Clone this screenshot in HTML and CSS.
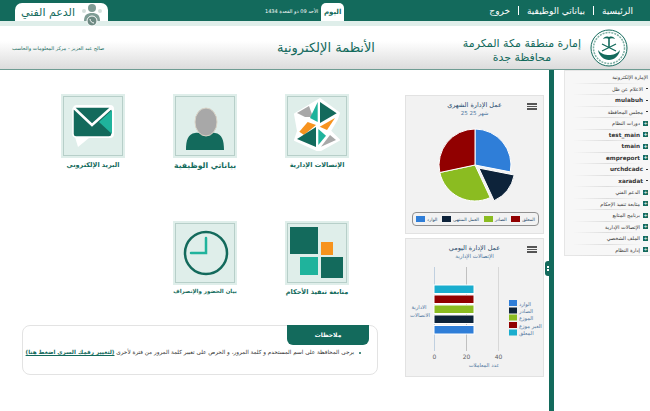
FILE: index.html
```html
<!DOCTYPE html>
<html lang="ar">
<head>
    <meta charset="UTF-8">
    <title>الأنظمة الإلكترونية</title>
    <link rel="stylesheet" href="styles.css">
</head>
<body>
    <div class="topbar">
        <div class="support-tab">
            <span>الدعم الفني</span>
            <svg class="support-icon" viewBox="0 0 22 24" width="22" height="24">
                <circle cx="11" cy="5" r="4" fill="#7f9c95"/>
                <path d="M3 18c0-6 3-8 8-8s8 2 8 8z" fill="#7f9c95"/>
                <circle cx="3" cy="8" r="2" fill="#d5dfdc"/>
                <circle cx="19" cy="8" r="2" fill="#d5dfdc"/>
                <circle cx="11" cy="18" r="5" fill="#6d8a83" stroke="#fff"/>
                <path d="M9 16c0 2 2 4 4 4" stroke="#fff" fill="none"/>
            </svg>
        </div>
        <div class="today">
            <span class="today-date">الأحد 09 ذو القعدة 1434</span>
            <span class="today-tab">اليوم</span>
        </div>
        <nav class="topnav">
            <a>خروج</a>
            <i></i>
            <a>بياناتي الوظيفية</a>
            <i></i>
            <a>الرئيسية</a>
        </nav>
    </div>
    <div class="strip"></div>

    <header class="masthead">
        <div class="credit">صالح عبد العزيز - مركز المعلومات والحاسب</div>
        <div class="system-name">الأنظمة الإلكترونية</div>
        <div class="emirate">
            <div class="emirate-name">إمارة منطقة مكة المكرمة<br>محافظة جدة</div>
            <svg class="seal" viewBox="0 0 38 38" width="38" height="38">
                <circle cx="19" cy="19" r="18" fill="#fff" stroke="#136a5c" stroke-width="1"/>
                <circle cx="19" cy="19" r="15.500" fill="none" stroke="#7fb0a4" stroke-width="1.500" stroke-dasharray="2 1"/>
                <path d="M19 8v11" stroke="#136a5c" stroke-width="1.600"/>
                <path d="M19 8c-3-1-5 0-6 2 2-1 4-1 6 0 2-1 4-1 6 0-1-2-3-3-6-2z" fill="#136a5c"/>
                <path d="M12 15l14 7M26 15l-14 7" stroke="#136a5c" stroke-width="1.300"/>
                <path d="M8 21c1 6 6 10 11 10s10-4 11-10c-3 4-7 5-11 5s-8-1-11-5z" fill="#136a5c"/>
            </svg>
        </div>
    </header>

    <div class="page">
        <main class="content">
            <div class="launcher">
                <div class="apps">
                    <a class="app">
                        <span class="tile">
                            <svg viewBox="0 0 64 64" width="64" height="64">
                                <path d="M35 5l19 14-2 6-7 12 9 9-18 10h-4L10 46l3-9-3-17z" fill="#fff" stroke="#fff" stroke-width="2" stroke-linejoin="round"/>
                                <path d="M12 19l12-7 4 11h-8z" fill="#a8a8a8"/>
                                <path d="M25 24l7.700-16v20z" fill="#1fb39c"/>
                                <path d="M35 8l16.700 11.300L35 29z" fill="#136a5c"/>
                                <path d="M14.300 37.700L22.700 28l8.300 3-12 10z" fill="#f7931e"/>
                                <path d="M34.700 32.700L50 24l-8 12z" fill="#f7931e"/>
                                <path d="M12 45l19-12v20z" fill="#136a5c"/>
                                <path d="M33.300 35l7.700 6.700-7.700 9.300z" fill="#1fb39c"/>
                                <path d="M36 52.700L45 41l6 5z" fill="#a8a8a8"/>
                            </svg>
                        </span>
                        <span class="app-label">الإتصالات الإدارية</span>
                    </a>
                    <a class="app">
                        <span class="tile">
                            <svg viewBox="0 0 64 64" width="64" height="64">
                                <path d="M13 56c0-10 2-16 9-17 4-1 6 1 10 1s6-2 10-1c7 1 9 7 9 17z" fill="#136a5c"/>
                                <ellipse cx="33" cy="28" rx="11" ry="14" fill="#a8a8a8" stroke="#d9d3c6"/>
                            </svg>
                        </span>
                        <span class="app-label big">بياناتي الوظيفية</span>
                    </a>
                    <a class="app">
                        <span class="tile">
                            <svg viewBox="0 0 64 64" width="64" height="64">
                                <path d="M17 53l-3-10h2a4 4 0 0 1-4-3v-25a4 4 0 0 1 4-4h33a4 4 0 0 1 4 4v25a4 4 0 0 1-4 4H28z" fill="#fff"/>
                                <path d="M15 13h33a3 3 0 0 1 3 3v24a3 3 0 0 1-3 3H15a3 3 0 0 1-3-3V16a3 3 0 0 1 3-3z" fill="#136a5c" stroke="#fff" stroke-width="1.500"/>
                                <path d="M38 28l13-12v24z" fill="#1fb39c"/>
                                <path d="M13 14l18 17 19-17" fill="none" stroke="#fff" stroke-width="2.500"/>
                            </svg>
                        </span>
                        <span class="app-label">البريد الإلكتروني</span>
                    </a>
                    <a class="app">
                        <span class="tile">
                            <svg viewBox="0 0 64 64" width="64" height="64">
                                <rect x="5" y="6" width="28" height="27" fill="#136a5c"/>
                                <rect x="36" y="21" width="12" height="13" fill="#f7931e"/>
                                <rect x="15" y="36" width="18" height="18" fill="#1fb39c"/>
                                <rect x="36" y="36" width="22" height="21" fill="#136a5c"/>
                            </svg>
                        </span>
                        <span class="app-label">متابعة تنفيذ الأحكام</span>
                    </a>
                    <a class="app">
                        <span class="tile">
                            <svg viewBox="0 0 64 64" width="64" height="64">
                                <circle cx="33" cy="32" r="21" fill="none" stroke="#136a5c" stroke-width="2.500"/>
                                <path d="M33 17v15H18" fill="none" stroke="#1fb39c" stroke-width="2.500" stroke-linecap="round"/>
                            </svg>
                        </span>
                        <span class="app-label small">بيان الحضور والإنصراف</span>
                    </a>
                </div>
                <section class="notes">
                    <h3 class="notes-tab">ملاحظات</h3>
                    <p class="notes-line">
                        <span class="bullet"></span>
                        يرجى المحافظة على اسم المستخدم و كلمة المرور، و الحرص على تغيير كلمة المرور من فترة لأخرى
                        <a>(لتغيير رقمك السري اضغط هنا)</a>
                    </p>
                </section>
            </div>

            <div class="charts">
                <section class="panel">
                    <span class="panel-menu"></span>
                    <h4 class="panel-title">عمل الإدارة الشهري</h4>
                    <div class="panel-sub">شهر 25 25</div>
                    <svg class="pie" viewBox="-40 -40 82 82" width="82" height="82">
                        <g stroke="#fff" stroke-width="1">
                            <path d="M0 0V-36A36 36 0 0 1 35.3 6.9z" fill="#2f7ed8"/>
                            <path d="M3.9 3.1L39.2 10A36 36 0 0 1 19.1 35.7z" fill="#0d233a"/>
                            <path d="M0 0L15.2 32.6A36 36 0 0 1 -35.2 7.5z" fill="#8bbc21"/>
                            <path d="M0 0L-35.2 7.5A36 36 0 0 1 0 -36z" fill="#910000"/>
                        </g>
                    </svg>
                    <div class="pie-legend">
                        <span class="key"><i class="blue"></i>الوارد</span>
                        <span class="key"><i class="navy"></i>العمل المنتهي</span>
                        <span class="key"><i class="green"></i>الصادر</span>
                        <span class="key"><i class="red"></i>المعلق</span>
                    </div>
                </section>
                <section class="panel">
                    <span class="panel-menu"></span>
                    <h4 class="panel-title">عمل الإدارة اليومي</h4>
                    <div class="panel-sub">الإتصالات الإدارية</div>
                    <svg class="bars" viewBox="0 0 137 117" width="137" height="117">
                        <g stroke="#c0c0c0" stroke-width="1">
                            <path d="M28.500 7v84" stroke="#c0d0e0"/>
                            <path d="M60.500 7v84"/>
                            <path d="M92.500 7v84" stroke="#d8d8d8"/>
                        </g>
                        <g stroke="#fff" stroke-width="1">
                            <rect x="28" y="25" width="40" height="8.500" fill="#1aadce"/>
                            <rect x="28" y="35" width="40" height="8.500" fill="#910000"/>
                            <rect x="28" y="45" width="40" height="8.500" fill="#8bbc21"/>
                            <rect x="28" y="55" width="40" height="8.500" fill="#0d233a"/>
                            <rect x="28" y="65.500" width="40" height="8.500" fill="#2f7ed8"/>
                        </g>
                        <g class="axis-num" text-anchor="middle">
                            <text x="28.500" y="99">0</text>
                            <text x="60.500" y="99">20</text>
                            <text x="92.500" y="99">40</text>
                        </g>
                        <g class="axis-label" text-anchor="middle">
                            <text x="78" y="107">عدد المعاملات</text>
                            <text x="13" y="49">الادارية</text>
                            <text x="14" y="57">الاتصالات</text>
                        </g>
                        <rect x="103" y="40" width="8" height="6" fill="#2f7ed8"/>
                        <rect x="103" y="47.500" width="8" height="6" fill="#0d233a"/>
                        <rect x="103" y="54.500" width="8" height="6" fill="#8bbc21"/>
                        <rect x="103" y="62" width="8" height="6" fill="#910000"/>
                        <rect x="103" y="69.500" width="8" height="6" fill="#1aadce"/>
                        <g class="axis-label">
                            <text x="113" y="46">الوارد</text>
                            <text x="113" y="53">الصادر</text>
                            <text x="113" y="60">الموزع</text>
                            <text x="113" y="67.500">الغير موزع</text>
                            <text x="113" y="75">المعلق</text>
                        </g>
                    </svg>
                </section>
            </div>
        </main>

        <div class="divider"><span class="handle"></span></div>

        <aside class="sidemenu">
            <a class="item">الإمارة الإلكترونية</a>
            <a class="item dash">الاعلام عن ظل</a>
            <a class="item dash latin">mulabuh</a>
            <a class="item dash">مجلس المحافظة</a>
            <a class="item plus">دورات النظام</a>
            <a class="item plus latin">test_main</a>
            <a class="item plus latin">tmain</a>
            <a class="item plus latin">empreport</a>
            <a class="item dash latin">urchdcadc</a>
            <a class="item dash latin">xaradat</a>
            <a class="item plus">الدعم الفني</a>
            <a class="item plus">متابعة تنفيذ الإحكام</a>
            <a class="item plus">برنامج المتابع</a>
            <a class="item plus">الإتصالات الإدارية</a>
            <a class="item plus">الملف الشخصي</a>
            <a class="item plus">إدارة النظام</a>
        </aside>
    </div>
</body>
</html>
```

FILE: styles.css
```css
* {
    box-sizing: border-box;
}

body {
    font-family: "DejaVu Sans", sans-serif;
    background-color: #fff;
    margin: 0;
    width: 650px;
    height: 411px;
    overflow: hidden;
}

.topbar {
    display: flex;
    align-items: flex-end;
    height: 21px;
    padding: 0 17px 0 15px;
    background-color: #136a5c;
    color: #fff;
}

.support-tab {
    display: flex;
    align-items: center;
    gap: 6px;
    width: 93px;
    height: 18px;
    padding-left: 6px;
    background-color: #fff;
    border-radius: 7px 7px 0 0;
    color: #136a5c;
    font-size: 11px;
    white-space: nowrap;
}

.support-icon {
    margin-top: 6px;
    flex-shrink: 0;
}

.today {
    display: flex;
    align-items: flex-end;
    gap: 3px;
    margin-left: 157px;
}

.today-date {
    font-size: 5px;
    line-height: 12px;
    padding-bottom: 4px;
    white-space: nowrap;
}

.today-tab {
    width: 23px;
    height: 18px;
    background-color: #fff;
    border-radius: 5px 5px 0 0;
    color: #136a5c;
    font-size: 7px;
    font-weight: bold;
    line-height: 18px;
    text-align: center;
}

.topnav {
    display: flex;
    align-items: center;
    gap: 8px;
    margin-left: auto;
    height: 21px;
    font-size: 9px;
    white-space: nowrap;
}

.topnav i {
    width: 1px;
    height: 9px;
    background-color: #fff;
}

.strip {
    height: 5px;
    background-color: #dfeeea;
}

.masthead {
    display: flex;
    align-items: center;
    height: 44px;
    padding: 0 22px 0 12px;
    background: linear-gradient(#fff 35%, #dcdcdc);
    border-bottom: 1px solid #6f9c93;
}

.credit {
    width: 94px;
    font-size: 5px;
    color: #136a5c;
    white-space: nowrap;
}

.system-name {
    margin-left: 171px;
    font-size: 13px;
    color: #136a5c;
    white-space: nowrap;
}

.emirate {
    display: flex;
    align-items: center;
    gap: 9px;
    margin-left: auto;
}

.emirate-name {
    margin-top: 6px;
    font-size: 11px;
    line-height: 14px;
    color: #136a5c;
    text-align: center;
    white-space: nowrap;
}

.page {
    display: flex;
    height: 341px;
}

.content {
    display: flex;
    width: 549px;
}

.launcher {
    width: 405px;
    padding: 24px 0 0 22px;
}

.apps {
    display: grid;
    grid-template-columns: repeat(3, 112px);
    grid-auto-rows: 127px;
    margin-left: 39px;
    direction: rtl;
    justify-content: start;
    width: 336px;
}

.app {
    display: flex;
    flex-direction: column;
    align-items: center;
    width: 64px;
    justify-self: end;
}

.tile {
    display: block;
    width: 64px;
    height: 64px;
    background-color: #dfeeea;
    box-shadow: inset 0 0 0 2px #dfeeea, inset 0 0 0 3px #b7cfc9;
}

.tile svg {
    display: block;
}

.app-label {
    margin-top: 3px;
    font-size: 6.5px;
    font-weight: bold;
    color: #136a5c;
    white-space: nowrap;
}

.app-label.big {
    font-size: 7.7px;
}

.app-label.small {
    font-size: 5.5px;
}

.notes {
    width: 356px;
    height: 50px;
    margin-top: -23px;
    border: 1px solid #e3e3e3;
    border-radius: 8px;
    direction: rtl;
}

.notes-tab {
    width: 82px;
    height: 20px;
    margin: -1px 8px 0 0;
    background-color: #136a5c;
    border-radius: 0 0 6px 6px;
    color: #fff;
    font-size: 6px;
    line-height: 20px;
    text-align: center;
}

.notes-line {
    margin: 4px 16px 0 4px;
    font-size: 5.7px;
    color: #333;
    white-space: nowrap;
}

.notes-line a {
    color: #136a5c;
    font-weight: bold;
    text-decoration: underline;
}

.bullet {
    display: inline-block;
    width: 2px;
    height: 2px;
    margin-left: 3px;
    background-color: #136a5c;
    border-radius: 50%;
}

.charts {
    display: flex;
    flex-direction: column;
    gap: 4px;
    width: 139px;
    padding-top: 25px;
}

.panel {
    position: relative;
    height: 139px;
    background-color: #f2f2f2;
    border: 1px solid #e2e2e2;
    text-align: center;
    direction: rtl;
}

.panel-menu {
    position: absolute;
    top: 7px;
    right: 6px;
    width: 10px;
    height: 7px;
    border-top: 2px solid #555;
    border-bottom: 2px solid #555;
    background: linear-gradient(#555, #555) center / 100% 1px no-repeat;
}

.panel-title {
    margin: 5px 0 0;
    font-size: 6.5px;
    font-weight: normal;
    color: #274b6d;
}

.panel-sub {
    margin-top: 1px;
    font-size: 5.5px;
    color: #4d759e;
}

.pie {
    display: block;
    margin: 9px auto 0 29px;
}

.pie-legend {
    display: flex;
    align-items: center;
    justify-content: space-between;
    direction: ltr;
    width: 127px;
    height: 14px;
    margin: 5px auto 0 6px;
    padding: 0 3px;
    border: 1px solid #909090;
    border-radius: 4px;
    font-size: 4.5px;
    color: #274b6d;
}

.key {
    display: flex;
    align-items: center;
    gap: 2px;
    white-space: nowrap;
}

.key i {
    width: 9px;
    height: 6px;
}

.blue { background-color: #2f7ed8; }
.navy { background-color: #0d233a; }
.green { background-color: #8bbc21; }
.red { background-color: #910000; }

.bars {
    display: block;
    margin-top: 1px;
    direction: ltr;
}

.axis-num {
    font-size: 6px;
    fill: #606060;
}

.axis-label {
    font-size: 5.2px;
    fill: #4d759e;
}

.divider {
    position: relative;
    width: 5px;
    margin-right: 10px;
    background-color: #136a5c;
}

.handle {
    position: absolute;
    top: 191px;
    left: -4px;
    width: 5px;
    height: 15px;
    background-color: #136a5c;
    border-radius: 3px 0 0 3px;
}

.handle::before {
    content: "";
    position: absolute;
    top: 5px;
    left: 2px;
    width: 2px;
    height: 2px;
    background-color: #fff;
    box-shadow: 0 3px #fff;
}

.sidemenu {
    width: 86px;
    height: 186px;
    padding-top: 1px;
    background-color: #f7f7f7;
    border: 1px solid #e6e6e6;
    border-width: 1px 0 1px 1px;
}

.item {
    display: flex;
    align-items: center;
    gap: 3px;
    height: 11.5px;
    padding-right: 2px;
    font-size: 5px;
    color: #333;
    white-space: nowrap;
    direction: rtl;
    border-bottom: 1px solid transparent;
    border-image: linear-gradient(to right, transparent 10%, #ddd 50%, transparent 90%) 1;
}

.item.latin {
    font-size: 5.7px;
    font-weight: bold;
}

.item.dash::before {
    content: "";
    flex-shrink: 0;
    width: 2px;
    height: 1px;
    background-color: #333;
}

.item.plus::before {
    content: "+";
    flex-shrink: 0;
    width: 5px;
    height: 5px;
    background-color: #136a5c;
    color: #fff;
    font-size: 5px;
    line-height: 5px;
    text-align: center;
}
```
